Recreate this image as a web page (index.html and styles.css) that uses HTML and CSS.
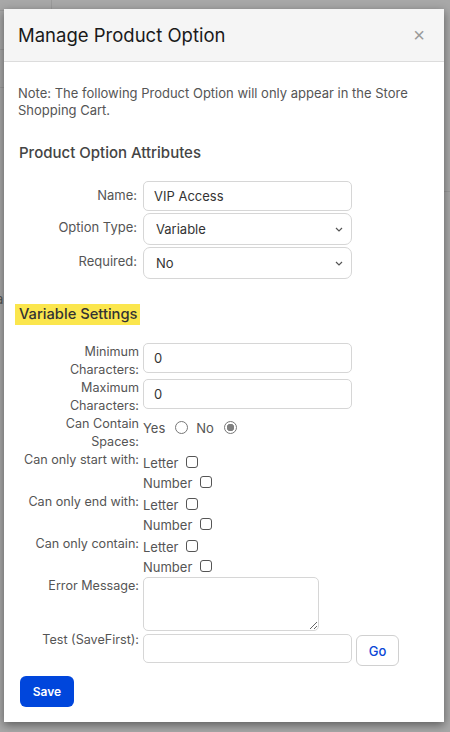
FILE: index.html
```html
<!DOCTYPE html>
<html lang="en">
<head>
    <meta charset="UTF-8">
    <title>Manage Product Option</title>
    <link rel="stylesheet" href="styles.css">
</head>
<body>
    <div class="page-behind">
        <span class="bl v1"></span>
        <span class="bl h1"></span>
        <span class="bl h2"></span>
        <span class="bl h3"></span>
        <span class="bl h4"></span>
        <span class="bt">a</span>
    </div>

    <div class="modal">
        <div class="modal-header">
            <h3>Manage Product Option</h3>
            <button class="close">&times;</button>
        </div>

        <div class="modal-body">
            <p class="note">Note: The following Product Option will only appear in the Store Shopping Cart.</p>

            <h4 class="section">Product Option Attributes</h4>

            <div class="form attrs">
                <label class="lbl">Name:</label>
                <div class="ctl"><input type="text" class="field name" value="VIP Access"></div>

                <label class="lbl">Option Type:</label>
                <div class="ctl select-wrap">
                    <select class="field sel"><option>Variable</option></select>
                    <svg class="chev" width="8" height="5" viewBox="0 0 8 5"><path d="M1 1l3 3 3-3" fill="none" stroke="#555" stroke-width="1.2"/></svg>
                </div>

                <label class="lbl">Required:</label>
                <div class="ctl select-wrap">
                    <select class="field sel"><option>No</option></select>
                    <svg class="chev" width="8" height="5" viewBox="0 0 8 5"><path d="M1 1l3 3 3-3" fill="none" stroke="#555" stroke-width="1.2"/></svg>
                </div>
            </div>

            <h4 class="section hl"><span>Variable Settings</span></h4>

            <div class="form vars">
                <label class="lbl">Minimum Characters:</label>
                <div class="ctl"><input type="text" class="field" value="0"></div>

                <label class="lbl">Maximum Characters:</label>
                <div class="ctl"><input type="text" class="field" value="0"></div>

                <label class="lbl">Can Contain Spaces:</label>
                <div class="ctl opts spaces">
                    <div class="opt">Yes <input type="radio" name="spaces"> No <input type="radio" name="spaces" checked></div>
                </div>

                <label class="lbl">Can only start with:</label>
                <div class="ctl opts">
                    <div class="opt">Letter <input type="checkbox"></div>
                    <div class="opt">Number <input type="checkbox"></div>
                </div>

                <label class="lbl">Can only end with:</label>
                <div class="ctl opts">
                    <div class="opt">Letter <input type="checkbox"></div>
                    <div class="opt">Number <input type="checkbox"></div>
                </div>

                <label class="lbl">Can only contain:</label>
                <div class="ctl opts">
                    <div class="opt">Letter <input type="checkbox"></div>
                    <div class="opt">Number <input type="checkbox"></div>
                </div>

                <label class="lbl">Error Message:</label>
                <div class="ctl"><textarea class="field area"></textarea></div>

                <label class="lbl">Test (SaveFirst):</label>
                <div class="ctl test">
                    <input type="text" class="field test-in">
                    <button class="go">Go</button>
                </div>
            </div>

            <button class="save">Save</button>
        </div>
    </div>
</body>
</html>
```

FILE: styles.css
```css
body {
    margin: 0;
    padding: 9px 6px 0 4px;
    background: #a8a8a8;
    font-family: Inter, "Liberation Sans", Arial, sans-serif;
    color: #555;
    height: 732px;
    box-sizing: border-box;
    overflow: hidden;
    position: relative;
}

/* faint bits of the page under the overlay */
.page-behind .bl {
    position: absolute;
    background: #9a9a9a;
}

.bl.v1 { left: 51px; top: 0; width: 1px; height: 9px; }
.bl.h1 { left: 0; top: 10px; width: 4px; height: 1px; }
.bl.h2 { left: 0; top: 49px; width: 4px; height: 1px; }
.bl.h3 { left: 0; top: 87px; width: 4px; height: 1px; }
.bl.h4 { right: 0; top: 191px; width: 6px; height: 1px; }

.page-behind .bt {
    position: absolute;
    left: -4px;
    top: 291px;
    font-size: 13px;
    color: #555;
}

.modal {
    position: relative;
    width: 440px;
    background: #fff;
    box-shadow: 0 3px 9px rgba(0,0,0,0.45);
}

.modal-header {
    height: 52px;
    padding: 0 18px 0 14px;
    background: #f5f5f5;
    border-bottom: 1px solid #dcdcdc;
    display: flex;
    align-items: center;
    justify-content: space-between;
}

.modal-header h3 {
    margin: 0;
    font-size: 18.5px;
    font-weight: 400;
    color: #1a1a1a;
}

.close {
    border: none;
    background: none;
    padding: 0;
    margin-right: 1px;
    font-size: 20px;
    line-height: 1;
    color: #9a9a9a;
    font-family: "Liberation Sans", Arial, sans-serif;
    cursor: pointer;
}

.modal-body {
    padding: 23px 14px 15px;
}

.note {
    margin: 0;
    font-size: 13px;
    line-height: 17px;
    color: #555;
}

.section {
    margin: 24px 0 18px 1px;
    font-size: 15px;
    line-height: 20px;
    font-weight: 500;
    color: #444;
}

.section.hl {
    margin: 25px 0 18px -3px;
    font-size: 14.7px;
    line-height: 21px;
}

.section.hl span {
    display: inline-block;
    background: #fbe64d;
    padding: 0 3px 0 4px;
    color: #333;
}

.form {
    display: grid;
    grid-template-columns: 121px 209px;
    column-gap: 4px;
}

.form.attrs {
    row-gap: 2px;
}

.lbl {
    font-size: 13px;
    line-height: 18px;
    text-align: right;
    color: #555;
}

.vars .lbl {
    font-size: 12.6px;
}

.attrs .lbl {
    padding-top: 5px;
    padding-right: 2px;
}

.field {
    width: 100%;
    box-sizing: border-box;
    height: 30px;
    border: 1px solid #d6d6d6;
    border-radius: 5px;
    padding: 0 10px;
    font-family: inherit;
    font-size: 13px;
    color: #333;
    background: #fff;
}

.sel {
    height: 32px;
    appearance: none;
    -webkit-appearance: none;
    padding-left: 12px;
    border-radius: 7px;
}

.select-wrap {
    position: relative;
}

.chev {
    position: absolute;
    right: 9px;
    top: 14px;
}

.opts {
    padding-top: 2px;
}

.opt {
    font-size: 13px;
    line-height: 20px;
    color: #555;
    display: flex;
    align-items: center;
    gap: 8px;
}

.opts.spaces {
    padding-top: 3px;
    padding-bottom: 2px;
}

.spaces .opt {
    gap: 10px;
}

input[type="checkbox"],
input[type="radio"] {
    appearance: none;
    -webkit-appearance: none;
    margin: 0;
    width: 12px;
    height: 12px;
    border: 1px solid #555;
    border-radius: 3px;
    background: #fff;
    box-sizing: border-box;
    position: relative;
    top: -1px;
}

input[type="radio"] {
    width: 13px;
    height: 13px;
    border-radius: 50%;
    border-color: #777;
    margin-right: -2px;
}

input[type="radio"]:checked {
    border-color: #777;
    background: radial-gradient(circle, #808080 0 3.5px, #fff 4px);
}

.area {
    width: 176px;
    height: 54px;
    padding: 6px 10px;
    resize: vertical;
    display: block;
}

.test {
    display: flex;
    gap: 4px;
    padding-top: 3px;
}

.test-in {
    height: 29px;
    flex: none;
}

.go {
    flex: none;
    margin-top: 1px;
    height: 31px;
    width: 43px;
    border: 1px solid #d0d0d0;
    border-radius: 6px;
    background: #fff;
    color: #0a47d6;
    font-family: inherit;
    font-size: 13px;
    font-weight: 500;
    cursor: pointer;
}

.save {
    margin: 10px 0 0 2px;
    height: 31px;
    width: 54px;
    border: none;
    border-radius: 6px;
    background: #0046dc;
    color: #fff;
    font-family: inherit;
    font-size: 12px;
    font-weight: 600;
    cursor: pointer;
}
```
